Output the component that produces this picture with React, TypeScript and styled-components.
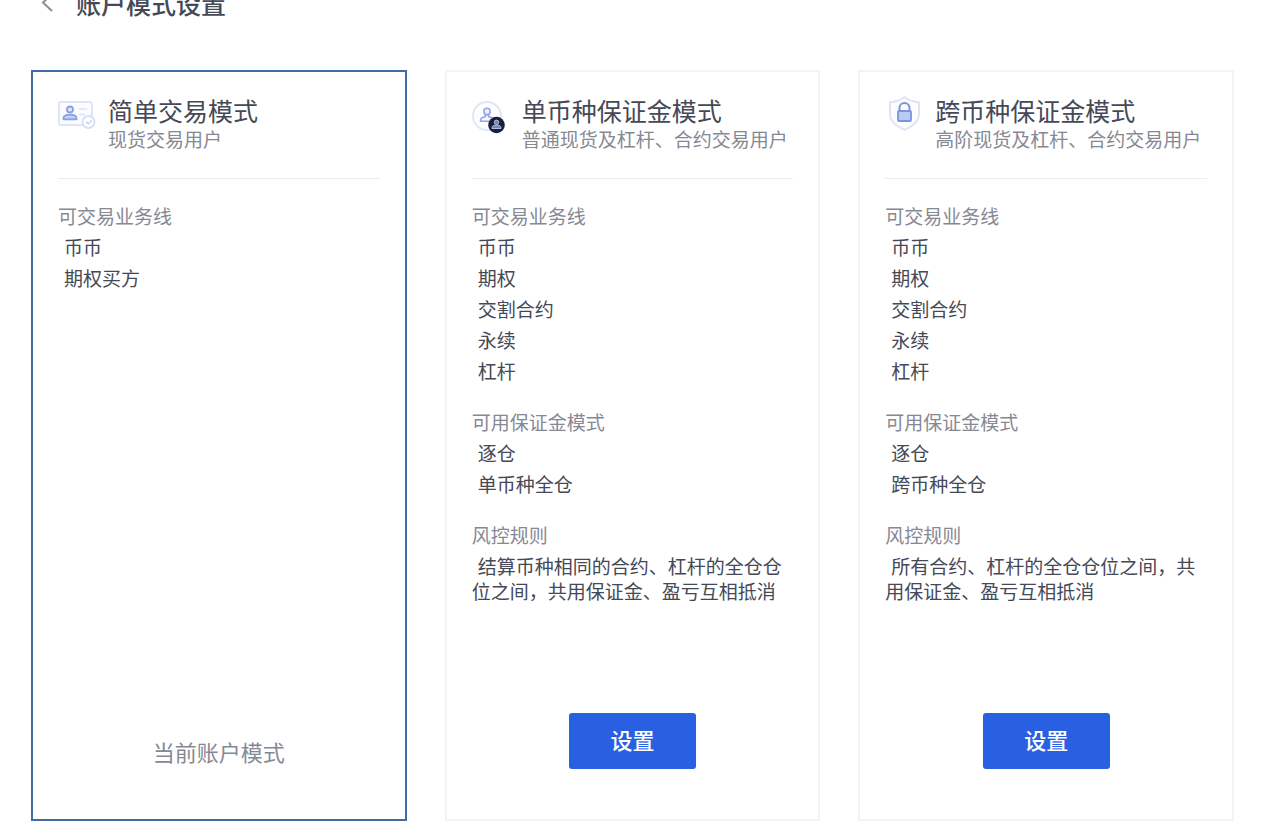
import React from "react";
import styled, { createGlobalStyle } from "styled-components";

const GlobalStyle = createGlobalStyle`
  *, *::before, *::after { box-sizing: border-box; }
  body {
    margin: 0;
    background: #fff;
    color: #454956;
    font-family: "Noto Sans CJK SC", sans-serif;
    font-size: 19px;
    line-height: 25px;
  }
  h1, h2, h3, p, ul { margin: 0; padding: 0; font-weight: 400; font-size: inherit; }
`;

const Page = styled.div`
  display: flex;
  flex-direction: column;
  min-height: 100vh;
  padding: 0 33px 13px 31px;
`;

const PageHeader = styled.header`
  display: flex;
  align-items: flex-end;
  gap: 22px;
  height: 17px;
  margin-bottom: 53px;
  padding-left: 9px;
`;

const BackButton = styled.button`
  display: flex;
  align-items: center;
  height: 28px;
  padding: 0;
  border: 0;
  background: none;
  color: #8b8e9b;
  cursor: pointer;
`;

const PageTitle = styled.h1`
  && {
    font-size: 25px;
    font-weight: 500;
    line-height: 28px;
  }
`;

const ModeGrid = styled.main`
  display: grid;
  flex: 1;
  grid-template-columns: repeat(3, minmax(0, 1fr));
  gap: 38px;
`;

const Card = styled.section<{ $current?: boolean }>`
  display: flex;
  flex-direction: column;
  padding: 22px 25px 50px;
  border: 2px solid ${(p) => (p.$current ? "#3f6d9f" : "#f3f3f4")};
`;

const CardHeader = styled.header`
  display: flex;
  gap: 12px;
  padding-bottom: 27px;
  border-bottom: 1px solid #ebecef;
  margin-bottom: 24px;

  svg { flex: none; }
`;

const CardTitle = styled.h2`
  && {
    margin: 2px 0;
    font-size: 25px;
    line-height: 28px;
  }
`;

const Muted = styled.p`
  color: #868993;
`;

const Group = styled.section`
  & + & { margin-top: 26px; }
`;

const GroupTitle = styled.h3`
  margin-bottom: 6px;
  color: #868993;
`;

const ItemList = styled.ul`
  display: grid;
  gap: 6px;
  padding-left: 6px;
  list-style: none;
`;

const Rule = styled.p`
  text-indent: 6px;
`;

const CardFooter = styled.footer`
  display: flex;
  align-items: center;
  justify-content: center;
  min-height: 56px;
  margin-top: auto;
`;

const CurrentLabel = styled.span`
  margin-top: 20px;
  color: #868993;
  font-size: 22px;
  line-height: 30px;
`;

const SetButton = styled.button`
  width: 127px;
  height: 56px;
  padding: 0 0 4px;
  border: 0;
  border-radius: 3px;
  background: #2960e1;
  color: #fff;
  font: 500 22px/30px "Noto Sans CJK SC", sans-serif;
  cursor: pointer;
`;

const ChevronLeft = () => (
  <svg width="14" height="20" viewBox="0 0 14 20" fill="none" aria-hidden="true">
    <path d="M12 1 3 9.500l9 8.500" stroke="currentColor" strokeWidth="2" />
  </svg>
);

const IdCardIcon = () => (
  <svg width="38" height="40" viewBox="0 0 38 40" fill="none" aria-hidden="true">
    <rect x="1" y="8" width="33" height="23" rx="2" fill="#fbfcff" stroke="#dfe4f7" strokeWidth="2" />
    <circle cx="12" cy="15.500" r="3" fill="#dfe7ff" stroke="#8a9ee0" strokeWidth="1.800" />
    <path d="M5.500 25.300v-1c0-2.300 2.400-3.700 6.500-3.700s6.500 1.400 6.500 3.700v1z" fill="#c3d0f8" stroke="#8a9ee0" strokeWidth="1.800" strokeLinejoin="round" />
    <path d="M21 15h8M21 20.500h6" stroke="#dce2f6" strokeWidth="1.600" />
    <circle cx="30.500" cy="28" r="6" fill="#fff" stroke="#d9dff4" strokeWidth="2" />
    <path d="m27.800 27.500 2.400 2.400 3.600-3.600" stroke="#cbd3ef" strokeWidth="1.500" />
  </svg>
);

const AccountsIcon = () => (
  <svg width="38" height="40" viewBox="0 0 38 40" fill="none" aria-hidden="true">
    <circle cx="15" cy="22" r="14" fill="#fdfeff" stroke="#e0e6f5" strokeWidth="2" />
    <circle cx="15" cy="17.500" r="3.200" fill="#eaf0ff" stroke="#93a4e6" strokeWidth="1.500" />
    <path d="M8.500 27.200v-1c0-2.200 2.200-3 4.800-3.400V21h3.400v1.800c2.600.4 4.800 1.200 4.800 3.400v1z" fill="#f4f7ff" stroke="#93a4e6" strokeWidth="1.500" strokeLinejoin="round" />
    <circle cx="24.500" cy="31" r="8.300" fill="#17203f" />
    <circle cx="24.500" cy="28.300" r="2.200" fill="#7785ad" stroke="#b4bddb" />
    <path d="M20 34.500v-1c0-1.500 1.800-2.400 4.500-2.400s4.500.9 4.500 2.400v1z" fill="#7785ad" stroke="#b4bddb" strokeLinejoin="round" />
  </svg>
);

const ShieldLockIcon = () => (
  <svg width="38" height="40" viewBox="0 0 38 40" fill="none" aria-hidden="true">
    <path d="M19.500 3c4 3.200 8.700 4.900 14.500 5.200v11.300c0 7.700-5.400 12.600-14.500 16.300C10.400 32.100 5 27.200 5 19.500V8.200C10.800 7.900 15.500 6.200 19.500 3z" fill="#fcfdff" stroke="#dfe4f3" strokeWidth="2" strokeLinejoin="round" />
    <path d="M14.500 17v-2.700c0-3 2-5.300 5-5.300s5 2.300 5 5.300V17" stroke="#8294d8" strokeWidth="2" />
    <rect x="13" y="17" width="13" height="10" rx="1" fill="#b9c9f8" stroke="#7e93df" strokeWidth="1.800" />
  </svg>
);

type Mode = {
  title: string;
  audience: string;
  icon: React.ReactNode;
  lines: string[];
  margin?: string[];
  rule?: string;
  current?: boolean;
};

const modes: Mode[] = [
  {
    title: "简单交易模式",
    audience: "现货交易用户",
    icon: <IdCardIcon />,
    lines: ["币币", "期权买方"],
    current: true,
  },
  {
    title: "单币种保证金模式",
    audience: "普通现货及杠杆、合约交易用户",
    icon: <AccountsIcon />,
    lines: ["币币", "期权", "交割合约", "永续", "杠杆"],
    margin: ["逐仓", "单币种全仓"],
    rule: "结算币种相同的合约、杠杆的全仓仓位之间，共用保证金、盈亏互相抵消",
  },
  {
    title: "跨币种保证金模式",
    audience: "高阶现货及杠杆、合约交易用户",
    icon: <ShieldLockIcon />,
    lines: ["币币", "期权", "交割合约", "永续", "杠杆"],
    margin: ["逐仓", "跨币种全仓"],
    rule: "所有合约、杠杆的全仓仓位之间，共用保证金、盈亏互相抵消",
  },
];

const ItemGroup = ({ title, items }: { title: string; items: string[] }) => (
  <Group>
    <GroupTitle>{title}</GroupTitle>
    <ItemList>
      {items.map((item) => (
        <li key={item}>{item}</li>
      ))}
    </ItemList>
  </Group>
);

export default function App() {
  return (
    <>
      <GlobalStyle />
      <Page lang="zh-CN">
        <PageHeader>
          <BackButton type="button" aria-label="返回">
            <ChevronLeft />
          </BackButton>
          <PageTitle>账户模式设置</PageTitle>
        </PageHeader>
        <ModeGrid>
          {modes.map((mode) => (
            <Card key={mode.title} $current={mode.current}>
              <CardHeader>
                {mode.icon}
                <div>
                  <CardTitle>{mode.title}</CardTitle>
                  <Muted>{mode.audience}</Muted>
                </div>
              </CardHeader>
              <ItemGroup title="可交易业务线" items={mode.lines} />
              {mode.margin && <ItemGroup title="可用保证金模式" items={mode.margin} />}
              {mode.rule && (
                <Group>
                  <GroupTitle>风控规则</GroupTitle>
                  <Rule>{mode.rule}</Rule>
                </Group>
              )}
              <CardFooter>
                {mode.current ? (
                  <CurrentLabel>当前账户模式</CurrentLabel>
                ) : (
                  <SetButton type="button">设置</SetButton>
                )}
              </CardFooter>
            </Card>
          ))}
        </ModeGrid>
      </Page>
    </>
  );
}
